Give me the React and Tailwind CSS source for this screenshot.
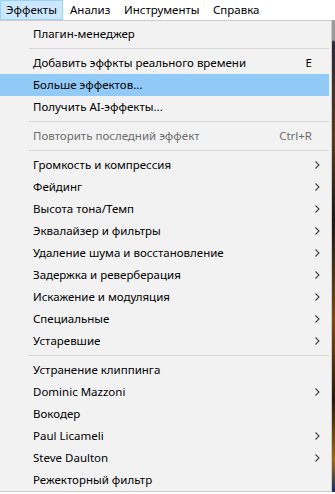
import React from "react";

const Sep = () => (
  <div className="h-[7px] flex items-center pl-[29px] pr-[2px]">
    <div className="h-px w-full bg-[#d7d7d7]" />
  </div>
);

const Chevron = () => (
  <svg width="5" height="8" viewBox="0 0 5 8" className="block">
    <path d="M0.5 0.5 L4 4 L0.5 7.5" fill="none" stroke="#404040" strokeWidth="1.1" />
  </svg>
);

function Item({ label, shortcut, sub, active, disabled }) {
  return (
    <div
      className={
        "h-[22px] flex items-center pl-[33px] pr-[10px] " +
        (active ? "bg-[#91c9f7] mr-[2px] " : "") +
        (disabled ? "text-[#6d6d6d]" : "text-black")
      }
    >
      <span className="flex-1 whitespace-nowrap">{label}</span>
      {shortcut && <span className="mr-[9px]">{shortcut}</span>}
      {sub && (
        <span className="mr-[1px]">
          <Chevron />
        </span>
      )}
    </div>
  );
}

export default function App() {
  const groupA = [
    "Громкость и компрессия",
    "Фейдинг",
    "Высота тона/Темп",
    "Эквалайзер и фильтры",
    "Удаление шума и восстановление",
    "Задержка и реверберация",
    "Искажение и модуляция",
    "Специальные",
    "Устаревшие",
  ];
  return (
    <div
      className="w-[335px] h-[494px] bg-white overflow-hidden text-[11.5px] leading-none"
      style={{ fontFamily: '"Noto Sans", "Liberation Sans", sans-serif' }}
    >
      <div className="h-[20px] flex items-stretch bg-white">
        <div className="w-[63px] pl-[5px] flex items-center bg-[#cce8ff] border border-[#99d1ff]">Эффекты</div>
        <div className="pl-[7px] w-[55px] flex items-center">Анализ</div>
        <div className="pl-[6px] w-[95px] flex items-center">Инструменты</div>
        <div className="pl-[0px] flex items-center">Справка</div>
      </div>
      <div className="flex">
        <div className="w-[332px] h-[472px] bg-[#f2f2f2] border-t border-r border-b border-[#cccccc] pt-[2px]">
          <Item label="Плагин-менеджер" />
          <Sep />
          <Item label="Добавить эффкты реального времени" shortcut="E" />
          <Item label="Больше эффектов..." active />
          <Item label="Получить AI-эффекты..." />
          <Sep />
          <Item label="Повторить последний эффект" shortcut="Ctrl+R" disabled />
          <Sep />
          {groupA.map((l) => (
            <Item key={l} label={l} sub />
          ))}
          <Sep />
          <Item label="Устранение клиппинга" />
          <Item label="Dominic Mazzoni" sub />
          <Item label="Вокодер" />
          <Item label="Paul Licameli" sub />
          <Item label="Steve Daulton" sub />
          <Item label="Режекторный фильтр" />
        </div>
        <div className="w-[3px] h-[472px] bg-[linear-gradient(180deg,#9a9a9a_0px,#9a9a9a_20px,#2a2a3a_22px,#5a3a1a_120px,#1a1a1a_200px,#7a4a10_300px,#2a1a0a_380px,#a06a10_440px,#203060_470px)]" />
      </div>
    </div>
  );
}
